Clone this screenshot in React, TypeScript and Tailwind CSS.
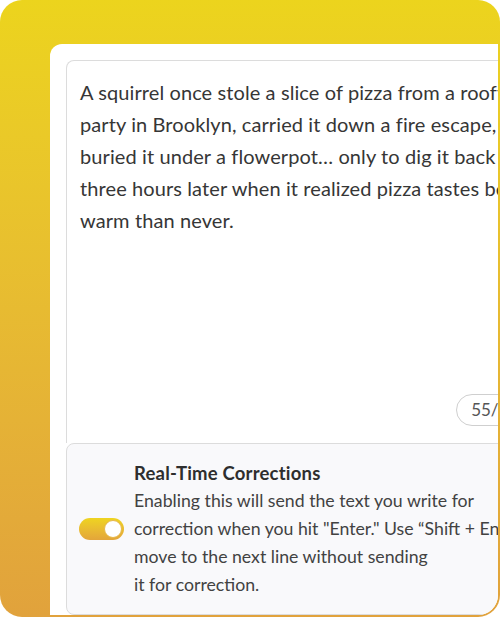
import React from "react";

const storyLines = [
  "A squirrel once stole a slice of pizza from a rooftop",
  "party in Brooklyn, carried it down a fire escape, and",
  "buried it under a flowerpot… only to dig it back up",
  "three hours later when it realized pizza tastes better",
  "warm than never.",
];

const hintLines = [
  "Enabling this will send the text you write for",
  "correction when you hit \"Enter.\" Use “Shift + Enter” to",
  "move to the next line without sending",
  "it for correction.",
];

const Toggle: React.FC<{ on: boolean }> = ({ on }) => (
  <div
    className={`relative h-[22px] w-[45px] shrink-0 rounded-full ${
      on ? "bg-gradient-to-b from-[#efd41f] to-[#e3a53a]" : "bg-gray-300"
    }`}
  >
    <div
      className={`absolute top-[2px] h-[18px] w-[18px] rounded-full border border-[#e7b84a] bg-white ${
        on ? "right-[2px]" : "left-[2px]"
      }`}
    />
  </div>
);

export default function App() {
  return (
    <div
      className="h-[619px] w-[501px] bg-white"
      style={{ fontFamily: "Lato, 'Noto Sans', sans-serif" }}
    >
      <div className="flex h-[617px] w-[500px] overflow-hidden rounded-[22px] bg-gradient-to-b from-[#ecd41d] to-[#e1a23c] pb-[2px] pl-[50px] pr-[2px] pt-[44px]">
        <div className="flex flex-1 flex-col overflow-hidden rounded-tl-[12px] rounded-br-[20px] bg-white pl-[16px] pt-[16px]">
          <div className="flex w-[500px] flex-1 flex-col">
            <div className="flex flex-1 flex-col rounded-t-lg border border-b-0 border-[#dcdcdc] pl-[13px] pt-[15px]">
              <div className="flex-1 whitespace-nowrap text-[20px] leading-[32px] tracking-[0.1px] text-[#363636]">
                {storyLines.map((line) => (
                  <div key={line}>{line}</div>
                ))}
              </div>
              <div className="flex justify-end pb-[17px] pr-[12px]">
                <span className="flex h-[32px] items-center rounded-full border border-[#cfcfcf] px-[14px] text-[17px] text-[#555]">
                  55/2000
                </span>
              </div>
            </div>
            <div className="flex h-[172px] items-center gap-[10px] rounded-lg border border-[#dcdcdc] bg-[#f9f9fb] pl-[12px]">
              <Toggle on />
              <div className="whitespace-nowrap text-[17.7px] leading-[28px] text-[#424242]">
                <div className="text-[18.5px] font-bold tracking-[0.2px] text-[#2e2e2e]">
                  Real-Time Corrections
                </div>
                {hintLines.map((line) => (
                  <div key={line}>{line}</div>
                ))}
              </div>
            </div>
          </div>
        </div>
      </div>
    </div>
  );
}
